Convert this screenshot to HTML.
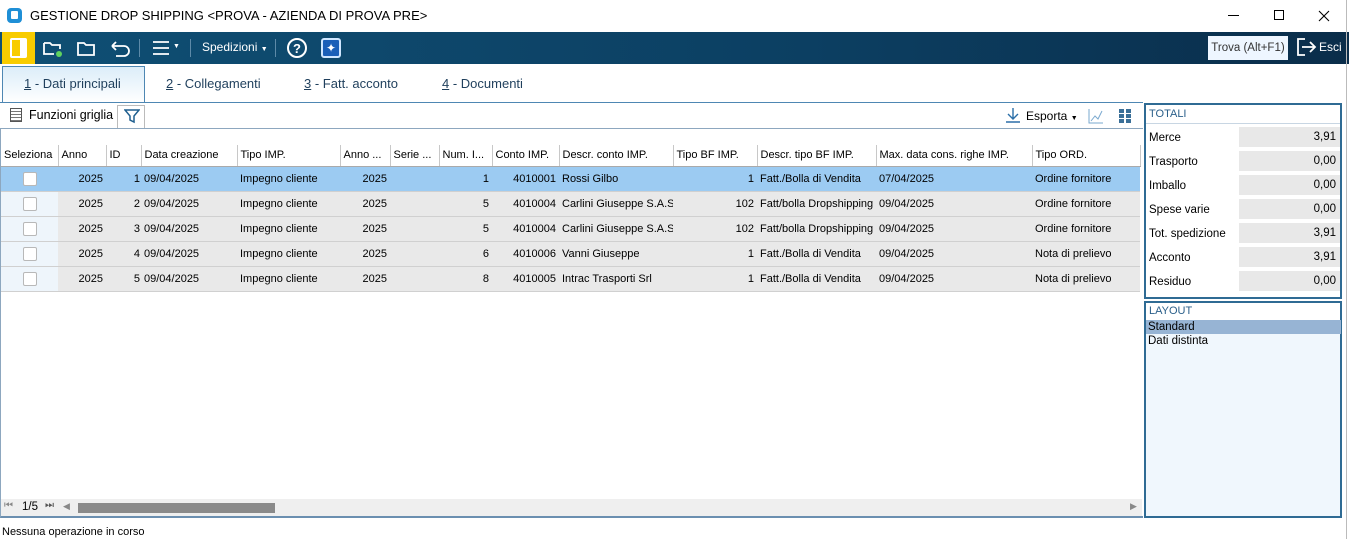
<!DOCTYPE html>
<html><head><meta charset="utf-8"><style>
*{box-sizing:border-box;margin:0;padding:0}
body{width:1349px;height:539px;position:relative;background:#fff;font-family:"Liberation Sans",sans-serif;font-size:12px;color:#000;overflow:hidden}
.abs{position:absolute}
.tb{top:32px;left:0;width:1349px;height:32px;background:linear-gradient(90deg,#0f4f74,#0c3f62 60%,#0a2d4a)}
.tab{top:64px;height:38px;line-height:40px;font-size:13px;color:#1f3f5c}
.tab u{text-decoration:underline}
table{border-collapse:collapse;table-layout:fixed;position:absolute;left:1px;top:145px;width:1139px}
td,th{height:25px;padding:0 3px;white-space:nowrap;overflow:hidden;font-size:11px}
th{height:21px;font-weight:normal;text-align:left;background:#fff;border-right:1px solid #c8c8c8;border-bottom:1px solid #aaa}
td{border-bottom:1px solid #d0d0d0;background:#e9e9e9}
tr.sel td{background:#9ccbf2}
td.c{background:#eef5fb;text-align:center}
tr.sel td.c{background:#9ccbf2}
.cb{display:inline-block;width:14px;height:14px;border:1px solid #b8b8b8;border-radius:2px;background:#fff;vertical-align:middle}
.r{text-align:right}
.tot{left:1144px;width:198px}
.lab{left:1149px;font-size:11.5px}
.val{left:1239px;width:101px;height:20px;background:#e8e8e8;text-align:right;padding-right:4px;line-height:20px;font-size:11.5px}
</style></head><body>
<!-- title -->
<div class="abs" style="left:7px;top:8px;width:15px;height:15px;background:#1f8fd6;border-radius:4px"></div>
<div class="abs" style="left:11px;top:11px;width:7px;height:8px;background:#fff;border-radius:1px"></div>
<div class="abs" style="left:30px;top:8px;font-size:13px">GESTIONE DROP SHIPPING &lt;PROVA - AZIENDA DI PROVA PRE&gt;</div>
<div class="abs" style="left:1228px;top:15px;width:11px;height:1px;background:#000"></div>
<div class="abs" style="left:1274px;top:10px;width:10px;height:10px;border:1px solid #000"></div>
<svg class="abs" style="left:1318px;top:10px" width="12" height="12"><path d="M1 1l10 10M11 1L1 11" stroke="#000" stroke-width="1.1"/></svg>
<!-- toolbar -->
<div class="abs tb"></div>
<div class="abs" style="left:2px;top:32px;width:33px;height:32px;background:#f8cc00"></div>
<div class="abs" style="left:10px;top:38px;width:17px;height:20px;border:2px solid #fff;border-radius:2px;background:linear-gradient(90deg,transparent 60%,#fff 60%)"></div>
<svg class="abs" style="left:40px;top:36px" width="140" height="24" fill="none" stroke="#fff" stroke-width="1.8">
<path d="M4 7h6l2 2h8v4M4 7v11h10"/><circle cx="19" cy="18" r="3" fill="#5fd35f" stroke="none"/>
<path d="M38 7h6l2 2h8v10H38z"/>
<path d="M72 10h12a5 5 0 010 10h-8M72 10l4-4M72 10l4 4"/>
<path d="M113 6h16M113 12h16M113 18h16"/>
</svg>
<div class="abs" style="left:139px;top:39px;width:1px;height:18px;background:#5d8aa8"></div>
<div class="abs" style="left:190px;top:39px;width:1px;height:18px;background:#5d8aa8"></div>
<div class="abs" style="left:275px;top:39px;width:1px;height:18px;background:#5d8aa8"></div>
<div class="abs" style="left:173px;top:43px;color:#fff;font-size:7px">▼</div>
<div class="abs" style="left:202px;top:40px;color:#fff;font-size:12px">Spedizioni <span style="font-size:7px">▼</span></div>
<div class="abs" style="left:287px;top:38px;width:20px;height:20px;border:2px solid #fff;border-radius:50%;color:#fff;font-size:13px;font-weight:bold;text-align:center;line-height:17px">?</div>
<div class="abs" style="left:321px;top:38px;width:20px;height:20px;border:2px solid #cfe6ff;border-radius:3px;background:#1a5fb8;color:#fff;text-align:center;line-height:16px;font-size:12px">✦</div>
<div class="abs" style="left:1208px;top:36px;width:80px;height:24px;background:#eef6ff;font-size:11.5px;line-height:24px;text-align:center;color:#333">Trova (Alt+F1)</div>
<svg class="abs" style="left:1296px;top:37px" width="22" height="20" fill="none" stroke="#fff" stroke-width="1.8"><path d="M9 2H2v16h7"/><path d="M6 10h13M14 5l5 5-5 5"/></svg>
<div class="abs" style="left:1319px;top:40px;color:#fff;font-size:12px">Esci</div>
<!-- tabs -->
<div class="abs" style="left:2px;top:66px;width:143px;height:37px;border:1px solid #4e87b3;border-bottom:none;background:linear-gradient(#dcedf9,#fff)"></div>
<div class="abs tab" style="left:24px"><u>1</u> - Dati principali</div>
<div class="abs tab" style="left:166px"><u>2</u> - Collegamenti</div>
<div class="abs tab" style="left:304px"><u>3</u> - Fatt. acconto</div>
<div class="abs tab" style="left:442px"><u>4</u> - Documenti</div>
<div class="abs" style="left:0;top:102px;width:1143px;height:1px;background:#4e87b3"></div>
<!-- grid toolbar -->
<div class="abs" style="left:10px;top:108px;width:12px;height:14px;border:1px solid #555;background:repeating-linear-gradient(#fff 0 2px,#777 2px 3px)"></div>
<div class="abs" style="left:29px;top:108px;font-size:12.5px">Funzioni griglia</div>
<div class="abs" style="left:117px;top:105px;width:28px;height:24px;border:1px solid #bbb;border-bottom:none;background:#fff"></div>
<svg class="abs" style="left:124px;top:108px" width="16" height="16" fill="none" stroke="#1f5f8f" stroke-width="1.5"><path d="M1 2h14l-5 6v6l-4-2V8z"/></svg>
<svg class="abs" style="left:1005px;top:107px" width="16" height="16" fill="none" stroke="#2b6fa8" stroke-width="1.4"><path d="M8 1v11M3 7l5 5 5-5M1 15h14"/></svg>
<div class="abs" style="left:1026px;top:109px;font-size:12px">Esporta <span style="font-size:7px">▼</span></div>
<svg class="abs" style="left:1087px;top:107px" width="50" height="18"><path d="M2 2v14h14" stroke="#7aa9cf" fill="none"/><path d="M4 14l4-5 3 3 4-8" stroke="#7aa9cf" fill="none"/><g fill="#3a6f98"><rect x="32" y="2" width="5" height="4"/><rect x="39" y="2" width="5" height="4"/><rect x="32" y="7" width="5" height="4"/><rect x="39" y="7" width="5" height="4"/><rect x="32" y="12" width="5" height="4"/><rect x="39" y="12" width="5" height="4"/></g></svg>
<div class="abs" style="left:0;top:128px;width:1143px;height:1px;background:#8da7bf"></div>
<!-- grid -->
<div class="abs" style="left:0;top:128px;width:1143px;height:390px;border-left:1px solid #8da7bf;border-bottom:2px solid #6b8fb0"></div>
<table>
<colgroup><col style="width:57px"><col style="width:48px"><col style="width:35px"><col style="width:96px"><col style="width:103px"><col style="width:50px"><col style="width:49px"><col style="width:53px"><col style="width:67px"><col style="width:114px"><col style="width:84px"><col style="width:119px"><col style="width:156px"><col style="width:108px"></colgroup>
<tr><th>Seleziona</th><th>Anno</th><th>ID</th><th>Data creazione</th><th>Tipo IMP.</th><th>Anno ...</th><th>Serie ...</th><th>Num. I...</th><th>Conto IMP.</th><th>Descr. conto IMP.</th><th>Tipo BF IMP.</th><th>Descr. tipo BF IMP.</th><th>Max. data cons. righe IMP.</th><th>Tipo ORD.</th></tr>
<tr class="sel"><td class="c"><span class="cb"></span></td><td class="r">2025</td><td class="r" style="padding-right:1px">1</td><td>09/04/2025</td><td>Impegno cliente</td><td class="r">2025</td><td></td><td class="r">1</td><td class="r">4010001</td><td>Rossi Gilbo</td><td class="r">1</td><td>Fatt./Bolla di Vendita</td><td>07/04/2025</td><td>Ordine fornitore</td></tr>
<tr><td class="c"><span class="cb"></span></td><td class="r">2025</td><td class="r" style="padding-right:1px">2</td><td>09/04/2025</td><td>Impegno cliente</td><td class="r">2025</td><td></td><td class="r">5</td><td class="r">4010004</td><td>Carlini Giuseppe S.A.S</td><td class="r">102</td><td>Fatt/bolla Dropshipping</td><td>09/04/2025</td><td>Ordine fornitore</td></tr>
<tr><td class="c"><span class="cb"></span></td><td class="r">2025</td><td class="r" style="padding-right:1px">3</td><td>09/04/2025</td><td>Impegno cliente</td><td class="r">2025</td><td></td><td class="r">5</td><td class="r">4010004</td><td>Carlini Giuseppe S.A.S</td><td class="r">102</td><td>Fatt/bolla Dropshipping</td><td>09/04/2025</td><td>Ordine fornitore</td></tr>
<tr><td class="c"><span class="cb"></span></td><td class="r">2025</td><td class="r" style="padding-right:1px">4</td><td>09/04/2025</td><td>Impegno cliente</td><td class="r">2025</td><td></td><td class="r">6</td><td class="r">4010006</td><td>Vanni Giuseppe</td><td class="r">1</td><td>Fatt./Bolla di Vendita</td><td>09/04/2025</td><td>Nota di prelievo</td></tr>
<tr><td class="c"><span class="cb"></span></td><td class="r">2025</td><td class="r" style="padding-right:1px">5</td><td>09/04/2025</td><td>Impegno cliente</td><td class="r">2025</td><td></td><td class="r">8</td><td class="r">4010005</td><td>Intrac Trasporti Srl</td><td class="r">1</td><td>Fatt./Bolla di Vendita</td><td>09/04/2025</td><td>Nota di prelievo</td></tr>
</table>
<!-- scrollbar -->
<div class="abs" style="left:1px;top:499px;width:1141px;height:17px;background:#efefef"></div>
<div class="abs" style="left:4px;top:500px;font-size:10px;color:#888">⏮</div>
<div class="abs" style="left:22px;top:501px;font-size:11.5px">1/5</div>
<div class="abs" style="left:45px;top:500px;font-size:10px;color:#555">⏭</div>
<div class="abs" style="left:63px;top:501px;font-size:9px;color:#888">◀</div>
<div class="abs" style="left:78px;top:503px;width:197px;height:10px;background:#8a8a8a"></div>
<div class="abs" style="left:1130px;top:501px;font-size:9px;color:#888">▶</div>
<!-- right panel -->
<div class="abs tot" style="top:103px;height:196px;border:2px solid #2f6b94"></div>
<div class="abs" style="left:1146px;top:105px;width:194px;height:19px;border-bottom:1px solid #c8d6e3;font-size:11px;color:#2a5f8a;padding:3px 3px">TOTALI</div>
<div class="abs lab" style="top:132px">Merce</div><div class="abs val" style="top:127px">3,91</div>
<div class="abs lab" style="top:156px">Trasporto</div><div class="abs val" style="top:151px">0,00</div>
<div class="abs lab" style="top:180px">Imballo</div><div class="abs val" style="top:175px">0,00</div>
<div class="abs lab" style="top:204px">Spese varie</div><div class="abs val" style="top:199px">0,00</div>
<div class="abs lab" style="top:228px">Tot. spedizione</div><div class="abs val" style="top:223px">3,91</div>
<div class="abs lab" style="top:252px">Acconto</div><div class="abs val" style="top:247px">3,91</div>
<div class="abs lab" style="top:276px">Residuo</div><div class="abs val" style="top:271px">0,00</div>
<div class="abs tot" style="top:301px;height:217px;border:2px solid #2f6b94;background:#f0f7fd"></div>
<div class="abs" style="left:1146px;top:303px;width:194px;height:17px;background:#fff;font-size:11px;color:#2a5f8a;padding:2px 3px">LAYOUT</div>
<div class="abs" style="left:1146px;top:320px;width:195px;height:14px;background:#97b4d4;font-size:11.5px;padding-left:2px;line-height:14px">Standard</div>
<div class="abs" style="left:1148px;top:334px;font-size:11.5px;line-height:14px">Dati distinta</div>
<div class="abs" style="left:1346px;top:0;width:1px;height:539px;background:#bbb"></div>
<div class="abs" style="left:2px;top:526px;font-size:11px">Nessuna operazione in corso</div>
</body></html>
